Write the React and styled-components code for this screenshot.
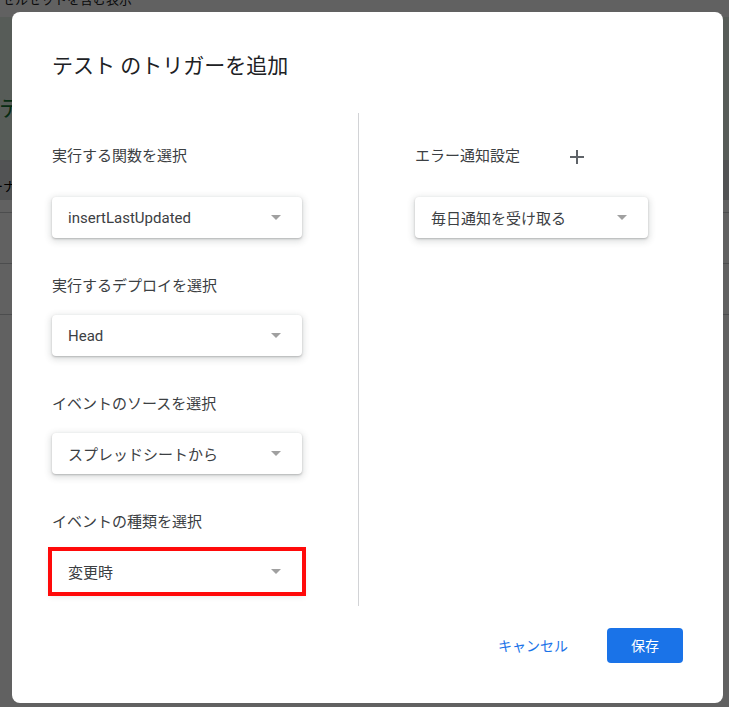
import styled, { createGlobalStyle } from 'styled-components'

const GlobalStyle = createGlobalStyle`
  html, body {
    margin: 0;
    padding: 0;
    background: #ffffff;
    font-family: Roboto, "Noto Sans CJK JP", sans-serif;
    -webkit-font-smoothing: antialiased;
  }
`

const colors = {
  title: '#202124',
  text: '#3c4043',
  blue: '#1a73e8',
  divider: '#d2d3d6',
  arrow: '#a0a0a0',
}

// page behind the modal
const Page = styled.div`
  height: 707px;
  overflow: hidden;
`

const TopLine = styled.div`
  color: #202124;
  font-size: 13px;
  height: 27px;
  line-height: 20px;
  margin-top: -10px;
  padding-left: 2px;
  white-space: nowrap;
`

const Banner = styled.div`
  align-items: center;
  background: #e4f2e8;
  display: flex;
  height: 143px;
`

const BannerTitle = styled.h1`
  color: #137333;
  font-size: 22px;
  font-weight: 400;
  margin: 34px 0 0 -1px;
`

const TableHead = styled.div`
  background: #d8dadd;
  font-size: 13px;
  height: 40px;
  line-height: 54px;
  overflow: hidden;
  text-indent: -23px;
  white-space: nowrap;
`

const TableRow = styled.div`
  border-bottom: 1px solid #c9cacc;
  height: ${p => p.h}px;
`

// modal
const Scrim = styled.div`
  background: rgba(0, 0, 0, 0.62);
  box-sizing: border-box;
  display: flex;
  inset: 0;
  padding: 12px 6px 4px 12px;
  position: fixed;
`

const Dialog = styled.div`
  background: #ffffff;
  border-radius: 8px;
  box-sizing: border-box;
  display: flex;
  flex: 1;
  flex-direction: column;
  padding: 40px 40px 40px 40px;
`

const Title = styled.h2`
  color: ${colors.title};
  font-size: 21px;
  font-weight: 400;
  line-height: 28px;
  margin: 0;
`

const Body = styled.div`
  display: flex;
  flex: 1;
  margin-top: 33px;
`

const Column = styled.div`
  display: flex;
  flex-direction: column;
  padding: 33px 0 0 ${p => (p.right ? 56 : 0)}px;
  width: ${p => (p.right ? 'auto' : '306px')};
`

const Divider = styled.div`
  background: ${colors.divider};
  width: 1px;
`

const Field = styled.div`
  display: flex;
  flex-direction: column;

  & + & {
    margin-top: 38px;
  }
`

const Label = styled.div`
  align-items: center;
  color: ${colors.text};
  display: flex;
  font-size: 15px;
  height: 20px;
  line-height: 20px;
  margin-bottom: ${p => (p.first ? 31 : 19)}px;
  white-space: nowrap;
`

const PlusButton = styled.span`
  color: #5f6368;
  display: inline-flex;
  margin-left: 50px;
  margin-top: 2px;
`

const Select = styled.div`
  align-items: center;
  background: #ffffff;
  border-radius: ${p => (p.highlighted ? 0 : 4)}px;
  box-shadow: 0 1px 2px rgba(60, 64, 67, 0.3), 0 2px 6px 2px rgba(60, 64, 67, 0.15);
  box-sizing: border-box;
  color: ${colors.text};
  display: flex;
  font-size: 15px;
  height: 41px;
  justify-content: space-between;
  outline: ${p => (p.highlighted ? '4px solid #ff0a0a' : 'none')};
  outline-offset: 0;
  padding: 0 21px 0 16px;
  width: ${p => p.width}px;
`

const Arrow = styled.span`
  border-left: 5px solid transparent;
  border-right: 5px solid transparent;
  border-top: 5px solid ${colors.arrow};
  height: 0;
  width: 0;
`

const Footer = styled.div`
  align-items: center;
  display: flex;
  justify-content: flex-end;
  margin-top: 21px;
`

const TextButton = styled.button`
  background: none;
  border: none;
  color: ${colors.blue};
  cursor: pointer;
  font-family: inherit;
  font-size: 14px;
  margin-right: 23px;
  padding: 8px 16px;
`

const PrimaryButton = styled.button`
  background: ${colors.blue};
  border: none;
  border-radius: 4px;
  color: #ffffff;
  cursor: pointer;
  font-family: inherit;
  font-size: 14px;
  height: 35px;
  padding: 0;
  width: 76px;
`

const Plus = () => (
  <svg width='14' height='14' viewBox='0 0 14 14'>
    <path d='M7 0v14M0 7h14' stroke='currentColor' strokeWidth='2' fill='none' />
  </svg>
)

const fields = [
  { label: '実行する関数を選択', value: 'insertLastUpdated' },
  { label: '実行するデプロイを選択', value: 'Head' },
  { label: 'イベントのソースを選択', value: 'スプレッドシートから' },
  { label: 'イベントの種類を選択', value: '変更時', highlighted: true },
]

const App = () => (
  <>
    <GlobalStyle />
    <Page>
      <TopLine>セルセットを含む表示</TopLine>
      <Banner>
        <BannerTitle>テスト</BannerTitle>
      </Banner>
      <TableHead>オーナー</TableHead>
      <TableRow h={12} />
      <TableRow h={50} />
      <TableRow h={50} />
    </Page>
    <Scrim>
      <Dialog>
        <Title>テスト のトリガーを追加</Title>
        <Body>
          <Column>
            {fields.map(({ label, value, highlighted }, i) => (
              <Field key={label}>
                <Label first={i === 0}>{label}</Label>
                <Select width={250} highlighted={highlighted}>
                  {value}
                  <Arrow />
                </Select>
              </Field>
            ))}
          </Column>
          <Divider />
          <Column right>
            <Field>
              <Label first>
                エラー通知設定
                <PlusButton>
                  <Plus />
                </PlusButton>
              </Label>
              <Select width={233}>
                毎日通知を受け取る
                <Arrow />
              </Select>
            </Field>
          </Column>
        </Body>
        <Footer>
          <TextButton>キャンセル</TextButton>
          <PrimaryButton>保存</PrimaryButton>
        </Footer>
      </Dialog>
    </Scrim>
  </>
)

export default App
